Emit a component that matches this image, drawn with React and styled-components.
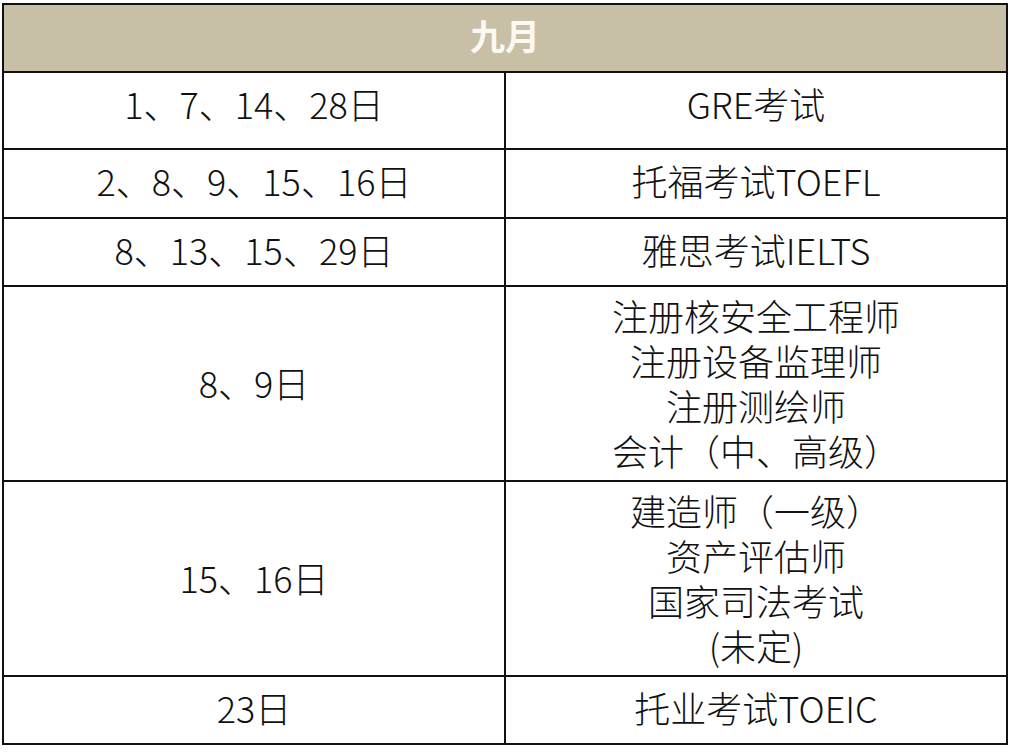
import React from "react"
import styled, {createGlobalStyle} from "styled-components"

const GlobalStyle = createGlobalStyle`
    html, body {
        margin: 0;
        padding: 0;
        background: #ffffff;
    }
    body {
        font-family: "Noto Sans CJK SC", "Noto Sans", sans-serif;
    }
`

const rows = [
    {date: "1、7、14、28日", exams: ["GRE考试"], height: 77, lift: 14},
    {date: "2、8、9、15、16日", exams: ["托福考试TOEFL"], height: 69, lift: 6},
    {date: "8、13、15、29日", exams: ["雅思考试IELTS"], height: 68, lift: 6},
    {date: "8、9日", exams: ["注册核安全工程师", "注册设备监理师", "注册测绘师", "会计（中、高级）"], height: 195, lift: 2},
    {date: "15、16日", exams: ["建造师（一级）", "资产评估师", "国家司法考试", "(未定)"], height: 195, lift: 2},
    {date: "23日", exams: ["托业考试TOEIC"], height: 68, lift: 6},
]

export default function App() {
    return <Page>
        <GlobalStyle/>
        <Schedule>
            <thead>
            <Row height={68}>
                <HeaderCell colSpan={2}>九月</HeaderCell>
            </Row>
            </thead>
            <tbody>
            {rows.map(row => <Row key={row.date} height={row.height}>
                <Cell lift={row.lift}>{row.date}</Cell>
                <Cell lift={row.lift}>
                    {row.exams.map(exam => <Line key={exam}>{exam}</Line>)}
                </Cell>
            </Row>)}
            </tbody>
        </Schedule>
    </Page>
}

const Page = styled.div`
    padding: 3px 3px 0 2px;
    width: 1006px;
`

const Schedule = styled.table`
    width: 1006px;
    border-collapse: collapse;
    table-layout: fixed;
    border: 2px solid #111111;
`

const Row = styled.tr`
    height: ${props => props.height}px;
`

const HeaderCell = styled.th`
    background-color: #c8bfa7;
    color: #fbf9f2;
    font-size: 35px;
    font-weight: bold;
    text-align: center;
    vertical-align: middle;
    border: 2px solid #111111;
    padding: 0 0 6px 0;
    line-height: 44px;
`

const Cell = styled.td`
    width: 50%;
    color: #111111;
    font-size: 36px;
    font-weight: 300;
    line-height: 45px;
    text-align: center;
    vertical-align: middle;
    border: 2px solid #111111;
    padding: 0 0 ${props => props.lift}px 0;
`

const Line = styled.div`
    white-space: nowrap;
`
